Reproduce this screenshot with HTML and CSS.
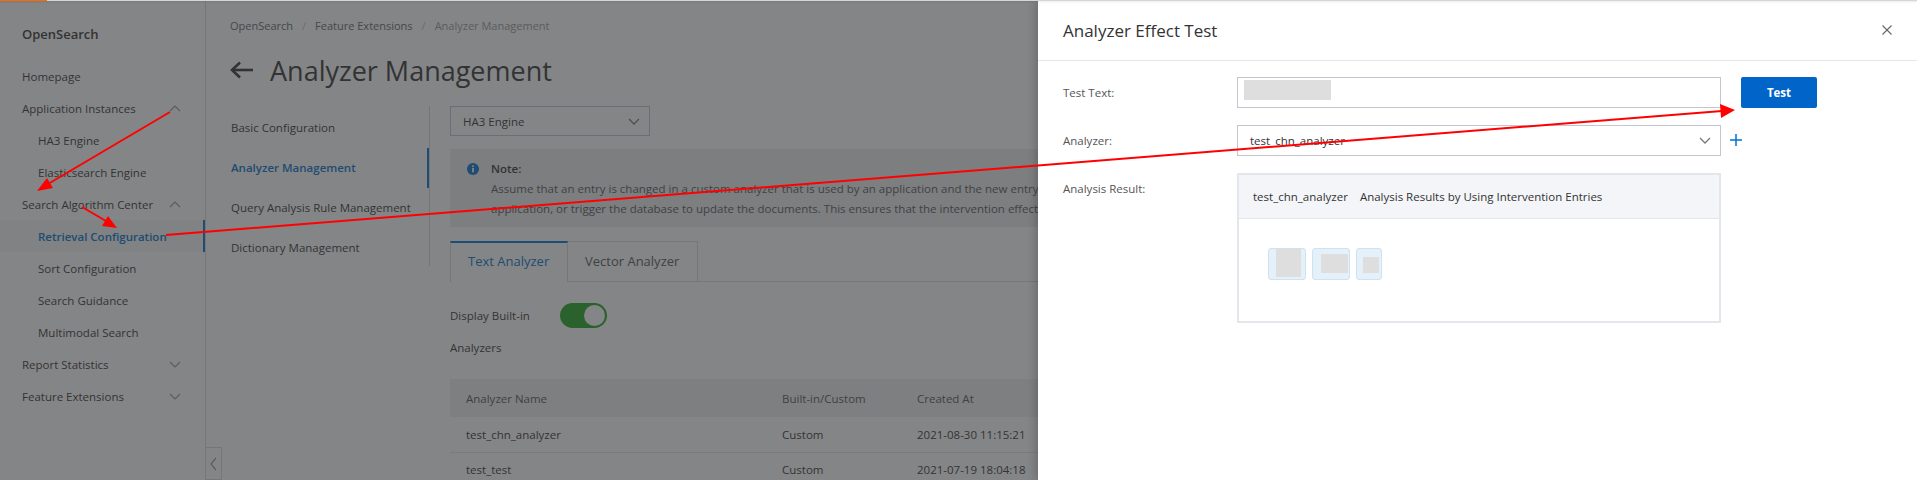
FILE: index.html
```html
<!DOCTYPE html>
<html lang="en">
<head>
  <meta charset="UTF-8">
  <meta name="viewport" content="width=device-width, initial-scale=1.0">
  <title>Analyzer Management</title>
  <link rel="stylesheet" href="styles.css">
</head>
<body>
  <div class="page">
    <div class="topline"><span class="brand"></span></div>

    <div class="app">
      <aside class="sidebar">
        <div class="side-title">OpenSearch</div>
        <ul class="nav">
          <li class="nav-item">Homepage</li>
          <li class="nav-item">Application Instances
            <svg class="chev" viewBox="0 0 12 7"><polyline points="1,6 6,1 11,6"/></svg>
          </li>
          <li class="nav-item sub">HA3 Engine</li>
          <li class="nav-item sub">Elasticsearch Engine</li>
          <li class="nav-item">Search Algorithm Center
            <svg class="chev" viewBox="0 0 12 7"><polyline points="1,6 6,1 11,6"/></svg>
          </li>
          <li class="nav-item sub active">Retrieval Configuration</li>
          <li class="nav-item sub">Sort Configuration</li>
          <li class="nav-item sub">Search Guidance</li>
          <li class="nav-item sub">Multimodal Search</li>
          <li class="nav-item">Report Statistics
            <svg class="chev" viewBox="0 0 12 7"><polyline points="1,1 6,6 11,1"/></svg>
          </li>
          <li class="nav-item">Feature Extensions
            <svg class="chev" viewBox="0 0 12 7"><polyline points="1,1 6,6 11,1"/></svg>
          </li>
        </ul>
      </aside>

      <main class="main">
        <div class="crumbs">OpenSearch<span class="sep">/</span>Feature Extensions<span class="sep">/</span><span class="current">Analyzer Management</span></div>
        <h1 class="page-title">
          <svg class="back" viewBox="0 0 24 18"><line x1="2" y1="9" x2="23" y2="9"/><polyline points="10,1.5 2,9 10,16.5"/></svg>
          Analyzer Management
        </h1>

        <div class="layout">
          <nav class="subnav">
            <div class="sub-item">Basic Configuration</div>
            <div class="sub-item active">Analyzer Management</div>
            <div class="sub-item">Query Analysis Rule Management</div>
            <div class="sub-item">Dictionary Management</div>
          </nav>

          <section class="content">
            <div class="select engine-select">
              <span>HA3 Engine</span>
              <svg class="caret" viewBox="0 0 12 7"><polyline points="1,1 6,6 11,1"/></svg>
            </div>

            <div class="note">
              <svg class="note-icon" viewBox="0 0 12 12"><circle cx="6" cy="6" r="6" fill="#0070cc"/><rect x="5.1" y="5" width="1.8" height="4.3" fill="#fff"/><circle cx="6" cy="3.3" r="1" fill="#fff"/></svg>
              <div class="note-body">
                <div class="note-title">Note:</div>
                <div>Assume that an entry is changed in a custom analyzer that is used by an application and the new entry e</div>
                <div>application, or trigger the database to update the documents. This ensures that the intervention effect c</div>
              </div>
            </div>

            <div class="tabs">
              <div class="tab active">Text Analyzer</div>
              <div class="tab">Vector Analyzer</div>
            </div>

            <div class="switch-row">
              <span class="switch-label">Display Built-in Analyzers</span>
              <span class="switch"><span class="knob"></span></span>
            </div>

            <table class="grid">
              <colgroup>
                <col style="width: 316px">
                <col style="width: 135px">
                <col>
              </colgroup>
              <thead>
                <tr><th>Analyzer Name</th><th>Built-in/Custom</th><th>Created At</th></tr>
              </thead>
              <tbody>
                <tr><td>test_chn_analyzer</td><td>Custom</td><td>2021-08-30 11:15:21</td></tr>
                <tr><td>test_test</td><td>Custom</td><td>2021-07-19 18:04:18</td></tr>
              </tbody>
            </table>
          </section>
        </div>
      </main>
    </div>

    <div class="collapse-tab">
      <svg viewBox="0 0 7 14"><polyline points="6,1 1,7 6,13"/></svg>
    </div>

    <div class="mask"></div>

    <div class="drawer">
      <div class="drawer-head">
        <span class="drawer-title">Analyzer Effect Test</span>
        <svg class="close" viewBox="0 0 10 10"><line x1="0.5" y1="0.5" x2="9.5" y2="9.5"/><line x1="9.5" y1="0.5" x2="0.5" y2="9.5"/></svg>
      </div>

      <div class="drawer-body">
        <div class="form-row">
          <div class="form-label">Test Text:</div>
          <div class="text-input"><span class="redact"></span></div>
          <button class="btn">Test</button>
        </div>

        <div class="form-row">
          <div class="form-label">Analyzer:</div>
          <div class="select analyzer-select">
            <span>test_chn_analyzer</span>
            <svg class="caret" viewBox="0 0 12 7"><polyline points="1,1 6,6 11,1"/></svg>
          </div>
          <svg class="add" viewBox="0 0 12 12"><line x1="6" y1="0" x2="6" y2="12"/><line x1="0" y1="6" x2="12" y2="6"/></svg>
        </div>

        <div class="form-row">
          <div class="form-label">Analysis Result:</div>
          <div class="result">
            <div class="result-head">
              <span>test_chn_analyzer</span>
              <span>Analysis Results by Using Intervention Entries</span>
            </div>
            <div class="result-body">
              <span class="token t1"><span class="redact-sm"></span></span>
              <span class="token t2"><span class="redact-sm"></span></span>
              <span class="token t3"><span class="redact-sm"></span></span>
            </div>
          </div>
        </div>
      </div>
    </div>

    <svg class="marks" viewBox="0 0 1917 480">
      <g stroke="#ff0000" stroke-width="2" fill="none">
        <line x1="170" y1="112" x2="48" y2="184"/>
        <line x1="82" y1="207" x2="106" y2="221"/>
        <line x1="166" y1="235" x2="1722" y2="111"/>
      </g>
      <g fill="#ff0000">
        <polygon points="37,191 47,178 53,188"/>
        <polygon points="117,228 102,226 108,216"/>
        <polygon points="1735,110 1721,118 1720,104"/>
      </g>
    </svg>
  </div>
</body>
</html>
```

FILE: styles.css
```css
* {
  box-sizing: border-box;
}
body {
  margin: 0;
  font-family: "Open Sans", "Noto Sans", Arial, sans-serif;
  font-size: 11.5px;
  color: #333;
  background: #fff;
}
.page {
  position: relative;
  width: 1917px;
  height: 480px;
  overflow: hidden;
}
.topline {
  position: absolute;
  top: 0;
  left: 0;
  right: 0;
  height: 1px;
  background: #d6d6d6;
  box-shadow: 0 1px 2px rgba(0, 0, 0, 0.12);
  z-index: 5;
}
.topline .brand {
  display: block;
  width: 47px;
  height: 1px;
  background: #ff6a00;
}
.app {
  display: flex;
  height: 480px;
}

/* left menu */
.sidebar {
  width: 206px;
  flex: none;
  border-right: 1px solid #d9d9d9;
  background: #fff;
}
.side-title {
  margin: 18px 0 10px;
  padding-left: 22px;
  line-height: 32px;
  font-size: 13px;
  font-weight: 600;
}
.nav {
  list-style: none;
  margin: 0;
  padding: 0;
}
.nav-item {
  display: flex;
  align-items: center;
  justify-content: space-between;
  height: 32px;
  padding: 0 24px 0 22px;
  white-space: nowrap;
}
.nav-item.sub {
  padding-left: 38px;
}
.nav-item.active {
  background: #f4f7fb;
  color: #0070cc;
  font-weight: 600;
  border-right: 2px solid #0070cc;
}
.chev {
  width: 12px;
  height: 7px;
  fill: none;
  stroke: #999;
  stroke-width: 1.2;
}
.collapse-tab {
  position: absolute;
  left: 205px;
  top: 447px;
  width: 17px;
  height: 33px;
  border: 1px solid #d9d9d9;
  background: #fff;
  display: flex;
  align-items: center;
  justify-content: center;
}
.collapse-tab svg {
  width: 7px;
  height: 14px;
  fill: none;
  stroke: #999;
  stroke-width: 1.2;
}

/* page body */
.main {
  flex: 1;
  min-width: 0;
  padding-left: 24px;
}
.crumbs {
  padding-top: 16px;
  line-height: 20px;
  font-size: 11px;
  color: #666;
  white-space: nowrap;
}
.crumbs .sep {
  color: #c2c2c2;
  padding: 0 9px;
}
.crumbs .current {
  color: #9a9a9a;
}
.page-title {
  margin: 14px 0 0;
  height: 40px;
  display: flex;
  align-items: center;
  font-size: 27px;
  font-weight: 400;
  color: #333;
  white-space: nowrap;
}
.back {
  width: 24px;
  height: 18px;
  margin-right: 16px;
  fill: none;
  stroke: #333;
  stroke-width: 2.6;
}
.layout {
  display: flex;
  margin-top: 16px;
}
.subnav {
  width: 200px;
  height: 160px;
  flex: none;
  padding-top: 2px;
  border-right: 1px solid #d6d6d6;
}
.sub-item {
  height: 40px;
  line-height: 40px;
  padding-left: 1px;
  white-space: nowrap;
}
.sub-item.active {
  color: #0070cc;
  font-weight: 600;
  border-right: 2px solid #0070cc;
}
/* the part right of x=1038 sits under the drawer, so it is clipped there */
.content {
  flex: none;
  width: 608px;
  overflow: hidden;
  padding-left: 20px;
}
.select {
  display: flex;
  align-items: center;
  justify-content: space-between;
  height: 30px;
  border: 1px solid #c4c6cf;
  background: #fff;
  padding: 0 9px 0 12px;
}
.caret {
  width: 12px;
  height: 7px;
  fill: none;
  stroke: #777;
  stroke-width: 1.3;
}
.engine-select {
  width: 200px;
}
.note {
  display: flex;
  height: 78px;
  margin-top: 13px;
  padding: 10px 0 0 17px;
  background: #eceef1;
  overflow: hidden;
}
.note-icon {
  width: 12px;
  height: 12px;
  flex: none;
  margin: 4px 12px 0 0;
}
.note-body {
  min-width: 0;
  overflow: hidden;
  line-height: 20px;
  white-space: nowrap;
  color: #555;
}
.note-title {
  color: #333;
  font-weight: 600;
}
.tabs {
  display: flex;
  height: 41px;
  margin-top: 14px;
  border-bottom: 1px solid #d9d9d9;
}
.tab {
  height: 41px;
  padding-left: 17px;
  line-height: 38px;
  font-size: 13px;
  color: #555;
  border: 1px solid #d9d9d9;
  border-left: none;
  border-bottom: none;
  white-space: nowrap;
}
.tab:first-child {
  width: 118px;
  border-left: 1px solid #d9d9d9;
}
.tab:last-child {
  width: 130px;
  height: 40px;
}
.tab.active {
  color: #0070cc;
  background: #fff;
  border-top: 2px solid #0070cc;
  line-height: 37px;
}
.switch-row {
  display: flex;
  margin-top: 18px;
}
.switch-label {
  width: 110px;
  line-height: 32px;
}
.switch {
  display: flex;
  align-items: center;
  justify-content: flex-end;
  width: 47px;
  height: 25px;
  margin-top: 3px;
  padding-right: 2px;
  border-radius: 13px;
  background: #1ea51e;
}
.knob {
  width: 21px;
  height: 21px;
  border-radius: 50%;
  background: #fff;
}
.grid {
  width: 1400px;
  margin-top: 15px;
  border-collapse: collapse;
  table-layout: fixed;
}
.grid th {
  height: 38px;
  padding-left: 16px;
  text-align: left;
  font-weight: 400;
  color: #555;
  background: #eef0f3;
}
.grid td {
  height: 35px;
  padding-left: 16px;
  border-bottom: 1px solid #e6e6e6;
}

/* modal layer */
.mask {
  position: absolute;
  top: 0;
  left: 0;
  right: 0;
  bottom: 0;
  background: rgba(50, 52, 54, 0.6);
  z-index: 2;
}
.drawer {
  position: absolute;
  top: 0;
  right: 0;
  width: 879px;
  height: 480px;
  background: #fff;
  box-shadow: -3px 0 8px rgba(0, 0, 0, 0.18);
  z-index: 3;
}
.drawer-head {
  display: flex;
  align-items: center;
  justify-content: space-between;
  height: 61px;
  padding: 0 25px;
  border-bottom: 1px solid #e6e6e6;
}
.drawer-title {
  font-size: 17px;
  color: #333;
}
.close {
  width: 10px;
  height: 10px;
  stroke: #666;
  stroke-width: 1.1;
}
.drawer-body {
  padding: 16px 25px 0;
}
.form-row {
  display: flex;
  align-items: flex-start;
  margin-bottom: 17px;
}
.form-label {
  width: 174px;
  flex: none;
  line-height: 31px;
  color: #555;
}
.text-input {
  width: 484px;
  height: 31px;
  padding: 2px 6px;
  border: 1px solid #c4c6cf;
}
.redact {
  display: block;
  width: 87px;
  height: 20px;
  background: #dedede;
}
.btn {
  width: 76px;
  height: 31px;
  margin-left: 20px;
  border: none;
  border-radius: 2px;
  background: #0064c8;
  color: #fff;
  font-family: inherit;
  font-size: 11.5px;
  font-weight: 700;
}
.analyzer-select {
  width: 484px;
  height: 31px;
}
.add {
  width: 12px;
  height: 12px;
  margin: 9px 0 0 9px;
  stroke: #0070cc;
  stroke-width: 1.5;
}
.result {
  width: 484px;
  height: 150px;
  border: 2px solid #e3e6ea;
}
.result-head {
  display: flex;
  align-items: center;
  gap: 12px;
  height: 44px;
  padding-left: 14px;
  background: #f4f5f8;
  border-bottom: 1px solid #e3e6ea;
}
.result-body {
  display: flex;
  gap: 6px;
  padding: 29px 0 0 29px;
}
.token {
  display: flex;
  align-items: flex-start;
  height: 32px;
  background: #e4f1fa;
  border: 1px solid #d0e2ee;
  border-radius: 3px;
}
.redact-sm {
  display: block;
  background: #dedede;
}
.t1 {
  width: 38px;
  padding-left: 7px;
}
.t1 .redact-sm {
  width: 25px;
  height: 28px;
}
.t2 {
  width: 38px;
  padding: 5px 0 0 8px;
}
.t2 .redact-sm {
  width: 27px;
  height: 19px;
}
.t3 {
  width: 26px;
  padding: 8px 0 0 6px;
}
.t3 .redact-sm {
  width: 16px;
  height: 16px;
}

/* red callout arrows drawn on top of the screenshot */
.marks {
  position: absolute;
  top: 0;
  left: 0;
  width: 1917px;
  height: 480px;
  z-index: 10;
  pointer-events: none;
}
```
